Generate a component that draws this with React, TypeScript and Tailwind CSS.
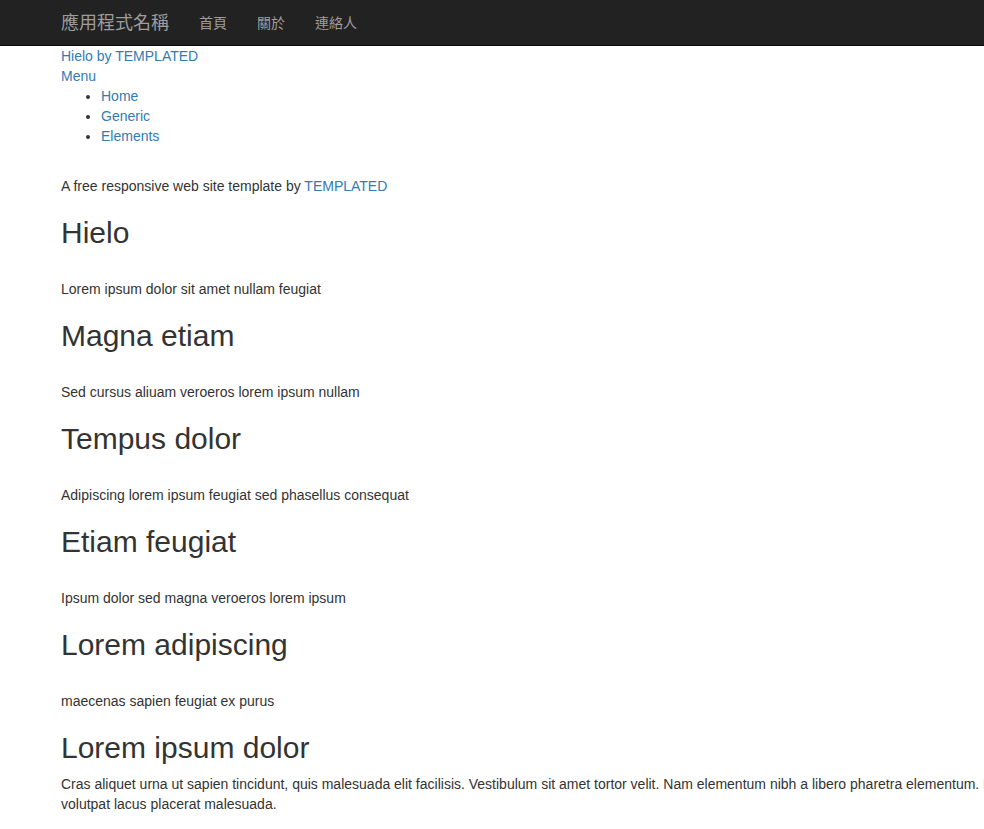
const font = "[font-family:'Liberation_Sans','Noto_Sans_CJK_TC',Arial,sans-serif]"

const sections = [
  { title: "Hielo", text: "Lorem ipsum dolor sit amet nullam feugiat" },
  { title: "Magna etiam", text: "Sed cursus aliuam veroeros lorem ipsum nullam" },
  { title: "Tempus dolor", text: "Adipiscing lorem ipsum feugiat sed phasellus consequat" },
  { title: "Etiam feugiat", text: "Ipsum dolor sed magna veroeros lorem ipsum" },
  { title: "Lorem adipiscing", text: "maecenas sapien feugiat ex purus" },
]

function Navbar() {
  return (
    <nav className="h-[46px] w-full bg-[#222] border-b border-[#080808] flex items-center">
      <div className="pl-[61px] flex items-center">
        <a href="#" className="text-[18px] text-[#9d9d9d] leading-5 pr-[15px]">應用程式名稱</a>
        <ul className="flex items-center">
          <li><a href="#" className="block px-[15px] text-[14px] leading-5 text-[#9d9d9d]">首頁</a></li>
          <li><a href="#" className="block px-[15px] text-[14px] leading-5 text-[#9d9d9d]">關於</a></li>
          <li><a href="#" className="block px-[15px] text-[14px] leading-5 text-[#9d9d9d]">連絡人</a></li>
        </ul>
      </div>
    </nav>
  )
}

export default function App() {
  return (
    <div className={`w-[984px] min-h-[829px] overflow-hidden bg-white text-[#333] text-[14px] leading-5 ${font}`}>
      <Navbar />
      <div className="pl-[61px] w-[1201px]">
        <a href="#" className="block text-[#337ab7]">Hielo by TEMPLATED</a>
        <a href="#" className="block text-[#337ab7]">Menu</a>
        <ul className="list-disc pl-10">
          <li><a href="#" className="text-[#337ab7]">Home</a></li>
          <li><a href="#" className="text-[#337ab7]">Generic</a></li>
          <li><a href="#" className="text-[#337ab7]">Elements</a></li>
        </ul>

        <p className="mt-[30px]">
          A free responsive web site template by <a href="#" className="text-[#337ab7]">TEMPLATED</a>
        </p>

        {sections.map((s) => (
          <div key={s.title}>
            <h2 className="mt-5 text-[30px] leading-[33px] font-medium">{s.title}</h2>
            <p className="mt-[30px]">{s.text}</p>
          </div>
        ))}

        <h2 className="mt-5 text-[30px] leading-[33px] font-medium">Lorem ipsum dolor</h2>
        <p className="mt-[10px] w-[1140px]">
          Cras aliquet urna ut sapien tincidunt, quis malesuada elit facilisis. Vestibulum sit amet tortor velit. Nam elementum nibh a libero pharetra elementum. Maecenas feugiat ex purus, quis volutpat lacus placerat malesuada.
        </p>
      </div>
    </div>
  )
}
